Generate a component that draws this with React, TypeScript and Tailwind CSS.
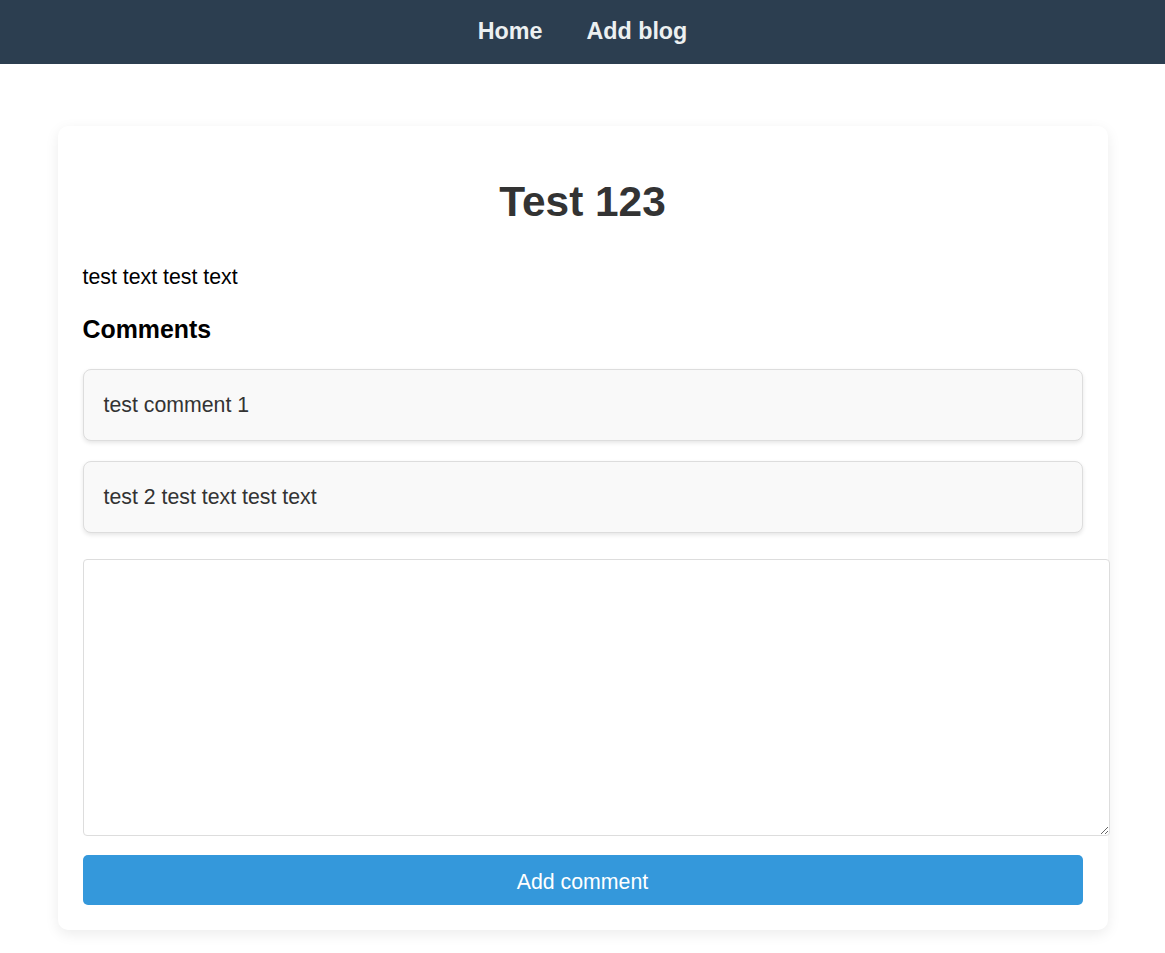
import React from 'react';

const App: React.FC = () => {
  const comments = ['test comment 1', 'test 2 test text test text'];

  return (
    <div className="min-h-screen bg-white font-['Liberation_Sans',Arial,sans-serif]">
      {/* Nav */}
      <nav className="h-16 bg-[#2c3e50] flex items-center justify-center gap-[44px] pb-[2px]">
        <a className="text-[23.3px] leading-[28px] font-bold text-[#ecf0f1]">Home</a>
        <a className="text-[23.3px] leading-[28px] font-bold text-[#ecf0f1]">Add blog</a>
      </nav>

      {/* Blog card */}
      <main className="pt-[62px] pb-10">
        <div className="mx-auto w-[1050px] bg-white rounded-[10px] shadow-[0_4px_14px_rgba(0,0,0,0.08)] p-[25px]">
          <h1 className="mt-[27px] text-center text-[42.4px] leading-[48px] font-bold text-[#333]">Test 123</h1>
          <p className="mt-[39px] text-[21.3px] leading-[24px] text-black">test text test text</p>
          <h3 className="mt-[26px] text-[24.9px] leading-[28px] font-bold text-black">Comments</h3>

          <div className="mt-[26px] flex flex-col gap-5">
            {comments.map((c, i) => (
              <div
                key={i}
                className="bg-[#f9f9f9] border border-[#ddd] rounded-lg px-5 py-5 text-[21.3px] leading-[30px] text-[#333] shadow-[0_2px_4px_rgba(0,0,0,0.1)]"
              >
                {c}
              </div>
            ))}
          </div>

          <textarea className="mt-[26px] block w-[1027px] h-[277px] border border-[#ddd] rounded-[4px] bg-white outline-none" />

          <button className="mt-[19px] block w-full h-[50px] pt-[3px] bg-[#3498db] rounded-[5px] text-white text-[21.3px] leading-[24px]">
            Add comment
          </button>
        </div>
      </main>
    </div>
  );
};

export default App;
